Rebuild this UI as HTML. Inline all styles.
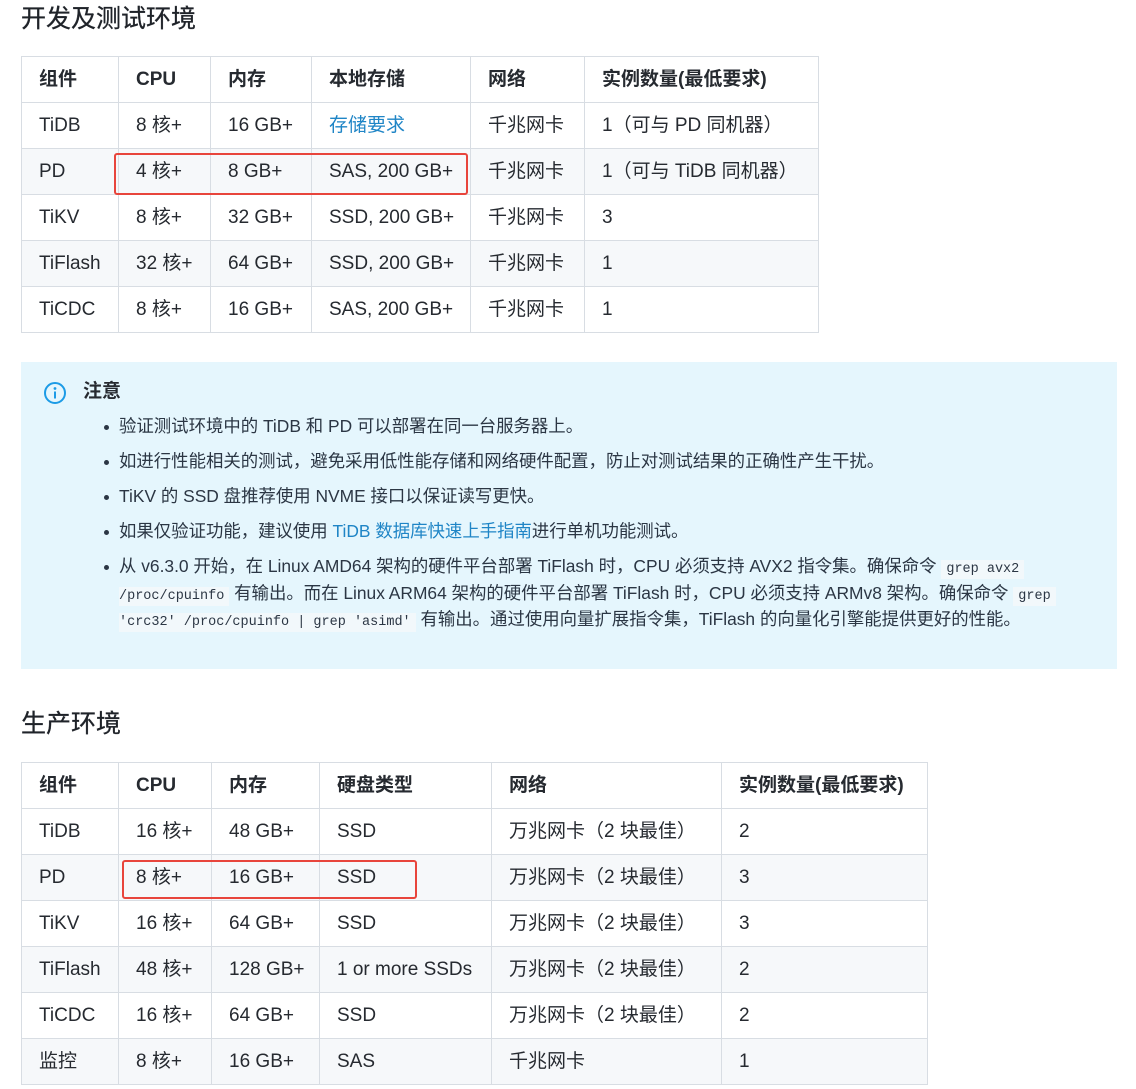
<!DOCTYPE html>
<html><head><meta charset="utf-8"><style>
body{margin:0;background:#fff;width:1136px;height:1089px;overflow:hidden;position:relative;font-family:"Liberation Sans","Noto Sans CJK SC",sans-serif;color:#262a30}
h2{position:absolute;left:21px;margin:0;font-size:25px;font-weight:normal;color:#1f2329;line-height:30px;-webkit-text-stroke:0.3px #1f2329}
table{position:absolute;left:21px;border-collapse:collapse;font-size:19px;table-layout:fixed}
td,th{border:1px solid #d8dde3;height:46px;padding:0 0 0 17px;text-align:left;white-space:nowrap;box-sizing:border-box;vertical-align:middle;line-height:22px}
th{font-weight:bold}
tr:nth-child(odd):not(:first-child) td{background:#f6f8fa}
a{color:#1f85c6;text-decoration:none}
.red{position:absolute;border:2px solid #e8453c;border-radius:3px;box-sizing:border-box}
.note{position:absolute;left:21px;top:362px;width:1096px;height:307px;background:#e5f6fd}
.note .t{position:absolute;left:62px;top:18px;font-size:19px;font-weight:bold;line-height:24px}
.note ul{position:absolute;left:98px;top:53px;margin:0;padding:0;list-style:none;font-size:17.4px;color:#2b3644}
.note li{position:relative;margin:0 0 13px 0;line-height:22px;white-space:nowrap}
.note li:before{content:"";position:absolute;left:-15px;top:10px;width:5px;height:5px;border-radius:50%;background:#2b3644}
code{font-family:"Liberation Mono",monospace;font-size:13.5px;background:#f2f8fb;padding:2px 5px;line-height:14px}
.lst{line-height:26.5px!important;margin-top:-2px!important}
.lst:before{top:12px!important}
</style></head><body>
<h2 style="top:4px">开发及测试环境</h2>
<table style="top:56px;width:797px">
<colgroup><col style="width:97px"><col style="width:92px"><col style="width:101px"><col style="width:159px"><col style="width:114px"><col style="width:234px"></colgroup>
<tr><th>组件</th><th>CPU</th><th>内存</th><th>本地存储</th><th>网络</th><th>实例数量(最低要求)</th></tr>
<tr><td>TiDB</td><td>8 核+</td><td>16 GB+</td><td><a>存储要求</a></td><td>千兆网卡</td><td>1（可与 PD 同机器）</td></tr>
<tr><td>PD</td><td>4 核+</td><td>8 GB+</td><td>SAS, 200 GB+</td><td>千兆网卡</td><td>1（可与 TiDB 同机器）</td></tr>
<tr><td>TiKV</td><td>8 核+</td><td>32 GB+</td><td>SSD, 200 GB+</td><td>千兆网卡</td><td>3</td></tr>
<tr><td>TiFlash</td><td>32 核+</td><td>64 GB+</td><td>SSD, 200 GB+</td><td>千兆网卡</td><td>1</td></tr>
<tr><td>TiCDC</td><td>8 核+</td><td>16 GB+</td><td>SAS, 200 GB+</td><td>千兆网卡</td><td>1</td></tr>
</table>
<div class="red" style="left:114px;top:153px;width:354px;height:42px"></div>
<div class="note">
<svg style="position:absolute;left:22px;top:19px" width="24" height="24" viewBox="0 0 24 24"><circle cx="12" cy="12" r="10" fill="none" stroke="#1c9be6" stroke-width="2"/><circle cx="12" cy="7.5" r="1.4" fill="#1c9be6"/><rect x="11" y="10.5" width="2" height="7" fill="#1c9be6"/></svg>
<div class="t">注意</div>
<ul>
<li>验证测试环境中的 TiDB 和 PD 可以部署在同一台服务器上。</li>
<li>如进行性能相关的测试，避免采用低性能存储和网络硬件配置，防止对测试结果的正确性产生干扰。</li>
<li>TiKV 的 SSD 盘推荐使用 NVME 接口以保证读写更快。</li>
<li>如果仅验证功能，建议使用 <a>TiDB 数据库快速上手指南</a>进行单机功能测试。</li>
<li class="lst">从 v6.3.0 开始，在 Linux AMD64 架构的硬件平台部署 TiFlash 时，CPU 必须支持 AVX2 指令集。确保命令 <code>grep avx2</code><br><code style="padding-left:0">/proc/cpuinfo</code> 有输出。而在 Linux ARM64 架构的硬件平台部署 TiFlash 时，CPU 必须支持 ARMv8 架构。确保命令 <code>grep</code><br><code style="padding-left:0">'crc32' /proc/cpuinfo | grep 'asimd'</code> 有输出。通过使用向量扩展指令集，TiFlash 的向量化引擎能提供更好的性能。</li>
</ul>
</div>
<h2 style="top:709px">生产环境</h2>
<table style="top:762px;width:906px">
<colgroup><col style="width:97px"><col style="width:93px"><col style="width:108px"><col style="width:172px"><col style="width:230px"><col style="width:206px"></colgroup>
<tr><th>组件</th><th>CPU</th><th>内存</th><th>硬盘类型</th><th>网络</th><th>实例数量(最低要求)</th></tr>
<tr><td>TiDB</td><td>16 核+</td><td>48 GB+</td><td>SSD</td><td>万兆网卡（2 块最佳）</td><td>2</td></tr>
<tr><td>PD</td><td>8 核+</td><td>16 GB+</td><td>SSD</td><td>万兆网卡（2 块最佳）</td><td>3</td></tr>
<tr><td>TiKV</td><td>16 核+</td><td>64 GB+</td><td>SSD</td><td>万兆网卡（2 块最佳）</td><td>3</td></tr>
<tr><td>TiFlash</td><td>48 核+</td><td>128 GB+</td><td>1 or more SSDs</td><td>万兆网卡（2 块最佳）</td><td>2</td></tr>
<tr><td>TiCDC</td><td>16 核+</td><td>64 GB+</td><td>SSD</td><td>万兆网卡（2 块最佳）</td><td>2</td></tr>
<tr><td>监控</td><td>8 核+</td><td>16 GB+</td><td>SAS</td><td>千兆网卡</td><td>1</td></tr>
</table>
<div class="red" style="left:122px;top:860px;width:295px;height:39px"></div>
</body></html>
